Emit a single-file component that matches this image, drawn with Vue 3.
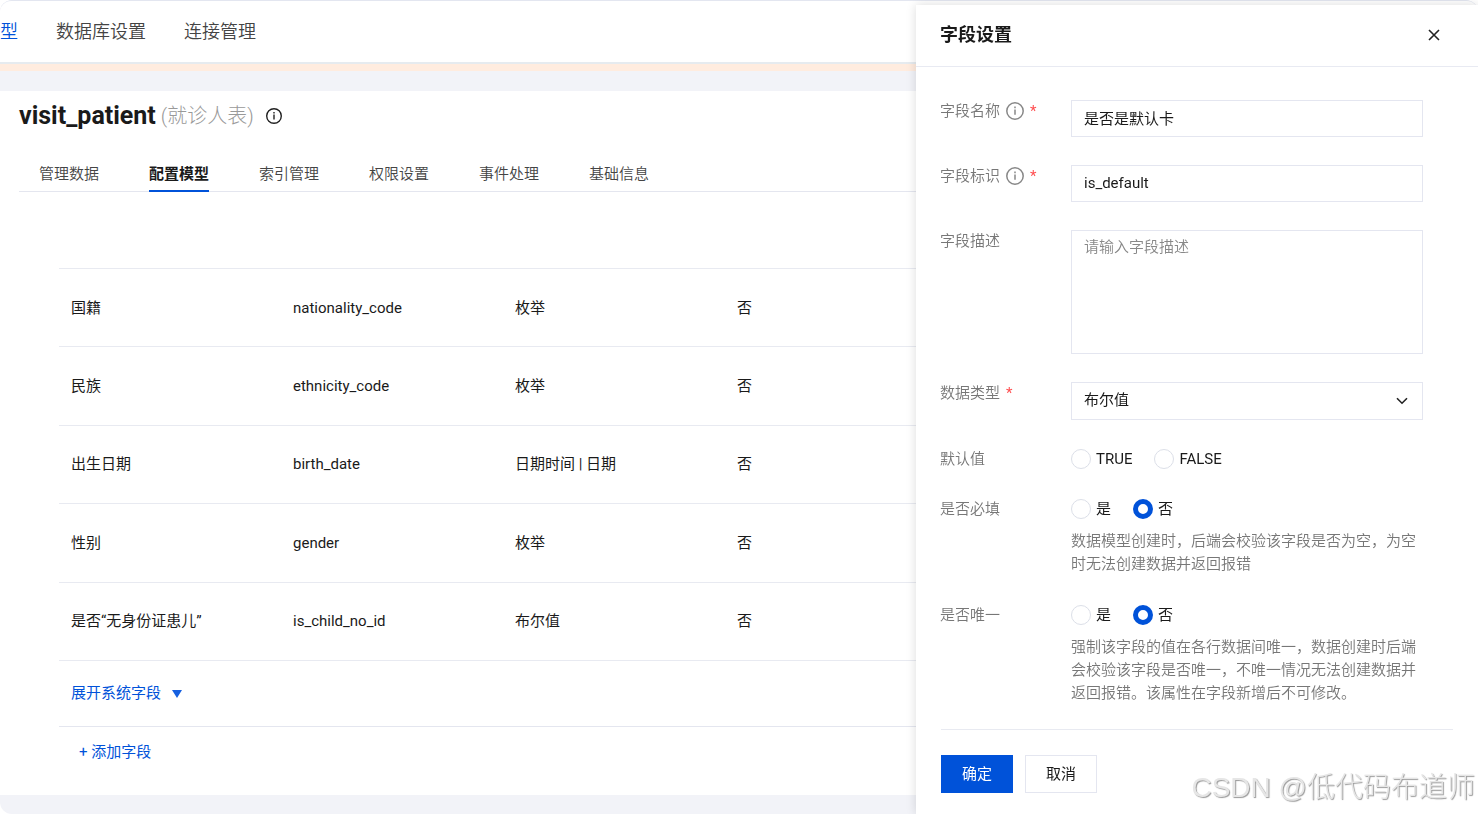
<template>
  <div class="shell">
    <header class="topbar">
      <nav class="topnav">
        <a
          v-for="item in navItems"
          :key="item"
          href="#"
          class="nav-link"
          :class="{ active: item === activeNav }"
          @click.prevent="activeNav = item"
        >{{ item }}</a>
      </nav>
    </header>
    <div class="notice-bar"></div>

    <main class="card">
      <h1 class="model-title">
        <span>visit_patient</span>
        <span class="model-alias">(就诊人表)</span>
        <svg class="title-info" viewBox="0 0 18 18" aria-hidden="true">
          <circle cx="9" cy="9" r="7.3" />
          <path d="M9 7.6v5M9 4.9v1.5" />
        </svg>
      </h1>

      <nav class="tabs">
        <a
          v-for="tab in tabs"
          :key="tab"
          href="#"
          class="tab"
          :class="{ active: tab === activeTab }"
          @click.prevent="activeTab = tab"
        >{{ tab }}</a>
      </nav>

      <div class="field-list">
        <table class="field-table">
          <tbody>
            <tr v-for="row in rows" :key="row.code">
              <td>{{ row.name }}</td>
              <td>{{ row.code }}</td>
              <td>{{ row.type }}</td>
              <td>{{ row.required }}</td>
            </tr>
          </tbody>
        </table>
        <div class="expand-row">
          <button type="button" class="link-btn">
            展开系统字段
            <svg class="caret" viewBox="0 0 10 8" aria-hidden="true">
              <path d="M0 0h10L5 8z" />
            </svg>
          </button>
        </div>
        <div class="add-row">
          <button type="button" class="link-btn">+ 添加字段</button>
        </div>
      </div>
    </main>
  </div>

  <aside class="drawer">
    <header class="drawer-header">
      <h2>字段设置</h2>
      <button type="button" class="close-btn" title="关闭">
        <svg viewBox="0 0 12 12" aria-hidden="true">
          <path d="M1 1l10 10M11 1L1 11" />
        </svg>
      </button>
    </header>

    <form class="drawer-form" @submit.prevent>
      <div class="form-item">
        <label class="form-label" for="field-name">
          字段名称
          <svg class="label-info" viewBox="0 0 18 18" aria-hidden="true">
            <circle cx="9" cy="9" r="8.2" />
            <path d="M9 7.4v5.4M9 4.6v1.6" />
          </svg>
          <span class="star">*</span>
        </label>
        <input id="field-name" v-model="form.name" class="control" type="text" />
      </div>

      <div class="form-item">
        <label class="form-label" for="field-code">
          字段标识
          <svg class="label-info" viewBox="0 0 18 18" aria-hidden="true">
            <circle cx="9" cy="9" r="8.2" />
            <path d="M9 7.4v5.4M9 4.6v1.6" />
          </svg>
          <span class="star">*</span>
        </label>
        <input id="field-code" v-model="form.code" class="control" type="text" />
      </div>

      <div class="form-item">
        <label class="form-label" for="field-desc">字段描述</label>
        <textarea
          id="field-desc"
          v-model="form.desc"
          class="control textarea"
          placeholder="请输入字段描述"
        ></textarea>
      </div>

      <div class="form-item">
        <label class="form-label" for="field-type">
          数据类型
          <span class="star">*</span>
        </label>
        <div class="select-wrap">
          <select id="field-type" v-model="form.type" class="control">
            <option>布尔值</option>
          </select>
          <svg class="chevron" viewBox="0 0 12 8" aria-hidden="true">
            <path d="M1 1.2l5 5 5-5" />
          </svg>
        </div>
      </div>

      <div
        v-for="group in radioGroups"
        :key="group.key"
        class="form-item"
        role="radiogroup"
        :aria-labelledby="`label-${group.key}`"
      >
        <span :id="`label-${group.key}`" class="form-label">{{ group.label }}</span>
        <div>
          <div class="radios">
            <label v-for="opt in group.options" :key="opt" class="radio">
              <input
                v-model="form[group.key]"
                type="radio"
                :name="group.key"
                :value="opt"
              />
              {{ opt }}
            </label>
          </div>
          <p v-if="group.tip" class="tip">{{ group.tip }}</p>
        </div>
      </div>
    </form>

    <footer class="drawer-footer">
      <button type="button" class="btn primary">确定</button>
      <button type="button" class="btn">取消</button>
    </footer>
  </aside>

  <div class="watermark">CSDN @低代码布道师</div>
</template>

<script setup>
import { reactive, ref } from "vue";

const navItems = ["型", "数据库设置", "连接管理"];
const activeNav = ref("型");

const tabs = ["管理数据", "配置模型", "索引管理", "权限设置", "事件处理", "基础信息"];
const activeTab = ref("配置模型");

const rows = [
  { name: "国籍", code: "nationality_code", type: "枚举", required: "否" },
  { name: "民族", code: "ethnicity_code", type: "枚举", required: "否" },
  { name: "出生日期", code: "birth_date", type: "日期时间 | 日期", required: "否" },
  { name: "性别", code: "gender", type: "枚举", required: "否" },
  { name: "是否“无身份证患儿”", code: "is_child_no_id", type: "布尔值", required: "否" }
];

const form = reactive({
  name: "是否是默认卡",
  code: "is_default",
  desc: "",
  type: "布尔值",
  defaultValue: "",
  required: "否",
  unique: "否"
});

const radioGroups = [
  { key: "defaultValue", label: "默认值", options: ["TRUE", "FALSE"] },
  {
    key: "required",
    label: "是否必填",
    options: ["是", "否"],
    tip: "数据模型创建时，后端会校验该字段是否为空，为空时无法创建数据并返回报错"
  },
  {
    key: "unique",
    label: "是否唯一",
    options: ["是", "否"],
    tip: "强制该字段的值在各行数据间唯一，数据创建时后端会校验该字段是否唯一，不唯一情况无法创建数据并返回报错。该属性在字段新增后不可修改。"
  }
];
</script>

<style>
body {
  margin: 0;
  overflow: hidden;
  background: #fff;
  color: #1a1a1a;
  font-family: Roboto, "Noto Sans CJK SC", sans-serif;
  font-size: 15px;
  line-height: 22px;
}

button,
input,
select,
textarea {
  font: inherit;
  color: inherit;
}
</style>

<style scoped>
* {
  box-sizing: border-box;
}

.shell {
  display: flex;
  flex-direction: column;
  min-height: 100vh;
  border-top: 1px solid #e3e6f0;
  border-radius: 12px;
  background: #f2f3f8;
  overflow: hidden;
}

.topbar {
  height: 63px;
  border-bottom: 2px solid #e6ebef;
  background: #fff;
}

.topnav {
  display: flex;
  gap: 38px;
  height: 61px;
  align-items: center;
}

.nav-link {
  font-size: 18px;
  font-weight: 350;
  color: #444;
  text-decoration: none;
}

.nav-link.active {
  color: #0052d9;
}

.notice-bar {
  height: 7px;
  background: #ffecdf;
}

.card {
  flex: 1;
  margin: 20px 0 19px;
  padding: 10px 19px 0;
  background: #fff;
}

.model-title {
  display: flex;
  align-items: center;
  margin: 0;
  font-size: 25px;
  line-height: 30px;
  font-weight: 700;
}

.model-alias {
  margin: 0 11px 0 5px;
  font-size: 20px;
  font-weight: 300;
  color: #999;
}

.title-info {
  width: 18px;
  height: 18px;
  fill: none;
  stroke: #222;
  stroke-width: 1.4;
}

.tabs {
  display: flex;
  gap: 50px;
  margin-top: 24px;
  padding-left: 20px;
  border-bottom: 1px solid #e4e6ef;
}

.tab {
  height: 37px;
  margin-bottom: -1px;
  line-height: 38px;
  font-weight: 350;
  color: #444;
  text-decoration: none;
}

.tab.active {
  border-bottom: 2px solid #0052d9;
  font-weight: 700;
  color: #1a1a1a;
}

.field-list {
  margin: 76px 0 0 40px;
}

.field-table {
  width: 100%;
  height: 393px;
  border-collapse: collapse;
  table-layout: fixed;
  border-top: 1px solid #e8eaf1;
}

.field-table td {
  width: 222px;
  padding: 0 12px;
  border-bottom: 1px solid #e8eaf1;
}

.field-table td:last-child {
  width: auto;
}

.expand-row {
  display: flex;
  align-items: center;
  height: 66px;
  padding: 0 12px 2px;
  border-bottom: 1px solid #e4e6ef;
}

.add-row {
  padding: 14px 20px 0;
}

.link-btn {
  padding: 0;
  border: 0;
  background: none;
  color: #0052d9;
  cursor: pointer;
}

.caret {
  width: 10px;
  height: 8px;
  margin-left: 7px;
  fill: #1560e0;
}

.drawer {
  position: fixed;
  top: 5px;
  right: 0;
  bottom: 0;
  width: 562px;
  background: #fff;
  box-shadow: 0 0 10px rgba(0, 0, 0, 0.14);
}

.drawer-header {
  display: flex;
  align-items: center;
  justify-content: space-between;
  height: 62px;
  padding: 0 36px 2px 24px;
  border-bottom: 1px solid #e8eaf2;
}

.drawer-header h2 {
  margin: 0;
  font-size: 18px;
  font-weight: 700;
}

.close-btn {
  display: flex;
  padding: 2px;
  border: 0;
  background: none;
  cursor: pointer;
}

.close-btn svg {
  width: 12px;
  height: 12px;
  fill: none;
  stroke: #222;
  stroke-width: 1.6;
}

.drawer-form {
  display: flex;
  flex-direction: column;
  gap: 28px;
  padding: 33px 55px 24px 24px;
}

.form-item {
  display: grid;
  grid-template-columns: 131px 1fr;
  align-items: start;
}

.form-label {
  display: flex;
  align-items: center;
  gap: 6px;
  height: 22px;
  font-weight: 350;
  color: #777;
}

.label-info {
  width: 18px;
  height: 18px;
  fill: none;
  stroke: #888;
  stroke-width: 1.5;
}

.star {
  color: #ff4d4f;
  font-weight: 400;
}

.control {
  display: block;
  width: 100%;
  height: 37px;
  margin: 0;
  padding: 0 12px 2px;
  border: 1px solid #e4e6f0;
  border-radius: 0;
  outline: none;
  background: #fff;
}

.textarea {
  height: 124px;
  padding: 5px 12px;
  resize: none;
}

.textarea::placeholder {
  color: #888;
  font-weight: 350;
}

.select-wrap {
  position: relative;
}

.select-wrap .control {
  height: 38px;
  appearance: none;
}

.chevron {
  position: absolute;
  top: 15px;
  right: 15px;
  width: 12px;
  height: 8px;
  fill: none;
  stroke: #222;
  stroke-width: 1.6;
  pointer-events: none;
}

.radios {
  display: flex;
  gap: 22px;
}

.radio {
  display: flex;
  align-items: center;
  gap: 5px;
  height: 22px;
}

.radio input {
  width: 20px;
  height: 20px;
  margin: 0;
  border: 1px solid #dcdfe8;
  border-radius: 50%;
  appearance: none;
  background: #fff;
}

.radio input:checked {
  border: 5px solid #0052d9;
}

.tip {
  margin: 10px 0 0;
  line-height: 23px;
  font-weight: 350;
  color: #777;
}

.drawer-footer {
  display: flex;
  gap: 12px;
  margin: 0 25px;
  padding-top: 25px;
  border-top: 1px solid #e8eaf1;
}

.btn {
  width: 72px;
  height: 38px;
  padding: 0;
  border: 1px solid #e4e6f0;
  background: #fff;
  cursor: pointer;
}

.btn.primary {
  border-color: #0052d9;
  background: #0052d9;
  color: #fff;
}

.watermark {
  position: fixed;
  right: 3px;
  bottom: 6px;
  font-family: "Liberation Sans", "Noto Sans CJK SC", sans-serif;
  font-size: 28px;
  line-height: 40px;
  font-weight: 300;
  color: #e6e6e6;
  text-shadow: 1px 1px 1px #999;
  pointer-events: none;
}
</style>
